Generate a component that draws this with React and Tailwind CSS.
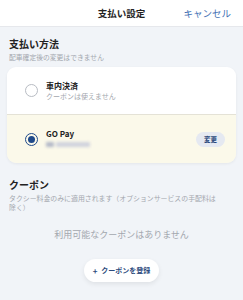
export default function App() {
  const font = { fontFamily: '"Noto Sans CJK JP", "Noto Sans", sans-serif' };
  return (
    <div className="w-[243px] h-[300px] bg-[#f1f4f8] overflow-hidden text-[#222]" style={font}>
      <div className="h-[27px] bg-white border-b border-[#e6e8ec] grid grid-cols-[1fr_auto_1fr] items-center">
        <div />
        <div className="text-[9.5px] font-bold leading-none text-[#222] pt-[2px]">支払い設定</div>
        <div className="flex justify-end pr-[12px] pt-[2px]">
          <span className="text-[9.5px] leading-none text-[#3f6fb3]">キャンセル</span>
        </div>
      </div>

      <div className="px-[9px] pt-[10px]">
        <div className="text-[10px] leading-[14px] font-bold">支払い方法</div>
        <div className="text-[6.8px] leading-[10px] text-[#a3a7ae] mt-[1px]">配車確定後の変更はできません</div>
      </div>

      <div className="mx-[7px] mt-[5px] rounded-[9px] overflow-hidden shadow-[0_1px_3px_rgba(0,0,0,0.06)]">
        <div className="h-[48px] bg-white flex items-center pl-[18px] border-b border-[#e4e2d6]">
          <div className="w-[13px] h-[13px] rounded-full border border-[#b8bcc3] bg-white" />
          <div className="ml-[8px] flex flex-col">
            <span className="text-[8px] leading-[10px] font-bold text-[#222]">車内決済</span>
            <span className="text-[7px] leading-[10px] text-[#a3a7ae]">クーポンは使えません</span>
          </div>
        </div>
        <div className="h-[48px] bg-[#fbf9ea] flex items-center pl-[18px] pr-[11px]">
          <div className="w-[13px] h-[13px] rounded-full border-[1.5px] border-[#1f4a8a] flex items-center justify-center">
            <div className="w-[7px] h-[7px] rounded-full bg-[#1f4a8a]" />
          </div>
          <div className="ml-[8px] flex flex-col">
            <span className="text-[8px] leading-[10px] font-bold text-[#222]">GO Pay</span>
            <div className="h-[10px] flex items-center">
              <div className="flex gap-[2px] blur-[1.5px]">
                <div className="w-[8px] h-[5px] bg-[#b4b9c8] rounded-[1px]" />
                <div className="w-[34px] h-[5px] bg-[#d0d3dd] rounded-[1px]" />
              </div>
            </div>
          </div>
          <div className="ml-auto h-[15px] w-[29px] rounded-full bg-[#e5e9f1] flex items-center justify-center">
            <span className="text-[6.5px] leading-none font-bold text-[#2c4a7c]">変更</span>
          </div>
        </div>
      </div>

      <div className="px-[9px] mt-[15px]">
        <div className="text-[10px] leading-[14px] font-bold">クーポン</div>
        <div className="w-[213px] text-[6.9px] leading-[9px] text-[#a3a7ae] mt-[2px]">
          タクシー料金のみに適用されます（オプションサービスの手配料は除く）
        </div>
      </div>

      <div className="mt-[17px] text-center text-[9px] leading-[12px] text-[#a3a7ae]">利用可能なクーポンはありません</div>

      <div className="mt-[18px] flex justify-center">
        <div className="w-[75px] h-[23px] rounded-full bg-white shadow-[0_2px_5px_rgba(0,0,0,0.08)] flex items-center justify-center gap-[4px]">
          <span className="text-[8px] leading-none font-bold text-[#2c4a7c]">+</span>
          <span className="text-[7px] leading-none font-bold text-[#2c4a7c]">クーポンを登録</span>
        </div>
      </div>
    </div>
  );
}
